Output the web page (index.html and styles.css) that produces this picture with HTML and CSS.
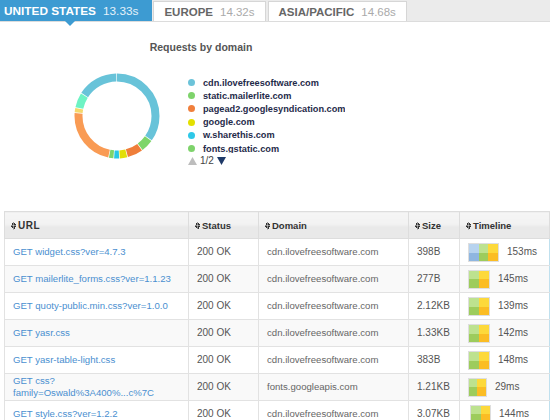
FILE: index.html
```html
<!DOCTYPE html>
<html lang="en">
<head>
    <meta charset="UTF-8">
    <title>Page speed by region</title>
    <link rel="stylesheet" href="styles.css">
</head>
<body>
    <div class="tabs">
        <div class="tab active">UNITED STATES <span class="time">13.33s</span></div>
        <div class="tab">EUROPE <span class="time">14.32s</span></div>
        <div class="tab">ASIA/PACIFIC <span class="time">14.68s</span></div>
    </div>

    <div class="chart">
        <h2 class="chart-title">Requests by domain</h2>
        <div class="chart-body">
            <svg class="donut" width="90" height="90" viewBox="0 0 90 90">
                <g transform="rotate(-90 45 45)" fill="none" stroke-width="8">
                    <circle cx="45" cy="45" r="38.5" pathLength="360" stroke="#68c3d9" stroke-dasharray="125 360" stroke-dashoffset="0"/>
                    <circle cx="45" cy="45" r="38.5" pathLength="360" stroke="#7dd56a" stroke-dasharray="17 360" stroke-dashoffset="-126"/>
                    <circle cx="45" cy="45" r="38.5" pathLength="360" stroke="#ef7e3a" stroke-dasharray="21 360" stroke-dashoffset="-144"/>
                    <circle cx="45" cy="45" r="38.5" pathLength="360" stroke="#e2de07" stroke-dasharray="10 360" stroke-dashoffset="-166"/>
                    <circle cx="45" cy="45" r="38.5" pathLength="360" stroke="#28c8e6" stroke-dasharray="7 360" stroke-dashoffset="-177"/>
                    <circle cx="45" cy="45" r="38.5" pathLength="360" stroke="#7ed46b" stroke-dasharray="6 360" stroke-dashoffset="-185"/>
                    <circle cx="45" cy="45" r="38.5" pathLength="360" stroke="#f99b54" stroke-dasharray="82 360" stroke-dashoffset="-192"/>
                    <circle cx="45" cy="45" r="38.5" pathLength="360" stroke="#f5d86a" stroke-dasharray="6 360" stroke-dashoffset="-275"/>
                    <circle cx="45" cy="45" r="38.5" pathLength="360" stroke="#6ef3c4" stroke-dasharray="20 360" stroke-dashoffset="-282"/>
                    <circle cx="45" cy="45" r="38.5" pathLength="360" stroke="#68c3d9" stroke-dasharray="56 360" stroke-dashoffset="-303"/>
                </g>
            </svg>
            <div class="legend">
                <ul class="legend-list">
                    <li><span class="dot dot-blue"></span>cdn.ilovefreesoftware.com</li>
                    <li><span class="dot dot-green"></span>static.mailerlite.com</li>
                    <li><span class="dot dot-orange"></span>pagead2.googlesyndication.com</li>
                    <li><span class="dot dot-yellow"></span>google.com</li>
                    <li><span class="dot dot-cyan"></span>w.sharethis.com</li>
                    <li><span class="dot dot-green"></span>fonts.gstatic.com</li>
                </ul>
                <div class="pager">
                    <svg width="9" height="8" viewBox="0 0 9 8"><path d="M4.5 0 L9 8 L0 8 Z" fill="#bdbdbd"/></svg>
                    <span>1/2</span>
                    <svg width="9" height="8" viewBox="0 0 9 8"><path d="M0 0 L9 0 L4.5 8 Z" fill="#1f3a68"/></svg>
                </div>
            </div>
        </div>
    </div>

    <table class="requests">
        <colgroup>
            <col style="width:184px">
            <col style="width:70px">
            <col style="width:150px">
            <col style="width:51px">
            <col style="width:90px">
        </colgroup>
        <thead>
            <tr>
                <th><span class="sort"></span>URL</th>
                <th><span class="sort"></span>Status</th>
                <th><span class="sort"></span>Domain</th>
                <th><span class="sort"></span>Size</th>
                <th><span class="sort"></span>Timeline</th>
            </tr>
        </thead>
        <tbody>
            <tr>
                <td class="url">GET widget.css?ver=4.7.3</td>
                <td>200 OK</td>
                <td class="domain">cdn.ilovefreesoftware.com</td>
                <td>398B</td>
                <td class="timeline"><span class="bar"><span class="seg seg-blue" style="width:10px"></span><span class="seg seg-green" style="width:9px"></span><span class="seg seg-yellow" style="width:10px"></span></span>153ms</td>
            </tr>
            <tr>
                <td class="url">GET mailerlite_forms.css?ver=1.1.23</td>
                <td>200 OK</td>
                <td class="domain">cdn.ilovefreesoftware.com</td>
                <td>277B</td>
                <td class="timeline"><span class="bar"><span class="seg seg-green" style="width:10px"></span><span class="seg seg-yellow" style="width:10px"></span></span>145ms</td>
            </tr>
            <tr>
                <td class="url">GET quoty-public.min.css?ver=1.0.0</td>
                <td>200 OK</td>
                <td class="domain">cdn.ilovefreesoftware.com</td>
                <td>2.12KB</td>
                <td class="timeline"><span class="bar"><span class="seg seg-green" style="width:10px"></span><span class="seg seg-yellow" style="width:10px"></span></span>139ms</td>
            </tr>
            <tr>
                <td class="url">GET yasr.css</td>
                <td>200 OK</td>
                <td class="domain">cdn.ilovefreesoftware.com</td>
                <td>1.33KB</td>
                <td class="timeline"><span class="bar"><span class="seg seg-green" style="width:10px"></span><span class="seg seg-yellow" style="width:10px"></span></span>142ms</td>
            </tr>
            <tr>
                <td class="url">GET yasr-table-light.css</td>
                <td>200 OK</td>
                <td class="domain">cdn.ilovefreesoftware.com</td>
                <td>383B</td>
                <td class="timeline"><span class="bar"><span class="seg seg-green" style="width:10px"></span><span class="seg seg-yellow" style="width:10px"></span></span>148ms</td>
            </tr>
            <tr>
                <td class="url">GET css?<br>family=Oswald%3A400%...c%7C</td>
                <td>200 OK</td>
                <td class="domain">fonts.googleapis.com</td>
                <td>1.21KB</td>
                <td class="timeline"><span class="bar"><span class="seg seg-green" style="width:8px"></span><span class="seg seg-yellow" style="width:9px"></span></span>29ms</td>
            </tr>
            <tr>
                <td class="url">GET style.css?ver=1.2.2</td>
                <td>200 OK</td>
                <td class="domain">cdn.ilovefreesoftware.com</td>
                <td>3.07KB</td>
                <td class="timeline"><span class="bar shifted"><span class="seg seg-green" style="width:10px"></span><span class="seg seg-yellow" style="width:9px"></span></span>144ms</td>
            </tr>
        </tbody>
    </table>
</body>
</html>
```

FILE: styles.css
```css
body {
    margin: 0;
    padding: 0;
    background-color: #ffffff;
    font-family: 'Liberation Sans', Arial, sans-serif;
    color: #555555;
    overflow: hidden;
}

/* region tabs */

.tabs {
    display: flex;
    gap: 2px;
    height: 21px;
    margin-left: -8px;
    background-color: #ebebeb;
    border-bottom: 1px solid #dcdcdc;
}

.tab {
    position: relative;
    display: flex;
    align-items: center;
    margin-top: 1px;
    padding: 0 10px;
    background-color: #ffffff;
    border: 1px solid #d6d6d6;
    border-bottom: none;
    color: #666666;
    font-size: 11.5px;
    font-weight: bold;
    white-space: nowrap;
}

.tab .time {
    margin-left: 7px;
    color: #aaaaaa;
    font-weight: normal;
    font-size: 11.5px;
}

.tab.active {
    margin-top: 0;
    margin-right: -1px;
    padding-left: 11px;
    padding-right: 13px;
    background-color: #3d9bd2;
    border-color: #3d9bd2;
    color: #ffffff;
    font-size: 11.8px;
}

.tab.active .time {
    color: #e4f1f9;
    font-size: 11.8px;
}

.tab.active::after {
    content: '';
    position: absolute;
    left: 72px;
    bottom: -5px;
    border-left: 5px solid transparent;
    border-right: 5px solid transparent;
    border-top: 5px solid #3d9bd2;
}

/* domain chart */

.chart {
    width: 300px;
    margin-left: 51px;
    height: 189px;
}

.chart-title {
    margin: 0;
    padding-top: 19px;
    text-align: center;
    font-size: 10.5px;
    font-weight: bold;
    color: #555555;
    line-height: 12px;
}

.chart-body {
    display: flex;
    align-items: flex-start;
    margin-top: 18px;
    margin-left: 21px;
}

.donut {
    display: block;
    margin-top: 0;
}

.legend {
    margin-left: 26px;
    margin-top: 5px;
}

.legend-list {
    list-style: none;
    margin: 0;
    padding: 0;
    height: 77px;
    overflow: hidden;
}

.legend-list li {
    display: flex;
    align-items: center;
    height: 13.2px;
    font-size: 9.2px;
    font-weight: bold;
    color: #1f2b4a;
    white-space: nowrap;
}

.dot {
    display: inline-block;
    width: 7px;
    height: 7px;
    border-radius: 50%;
    margin-right: 8px;
}

.dot-blue { background-color: #6cc3d9; }
.dot-green { background-color: #7ed36b; }
.dot-orange { background-color: #f07f3c; }
.dot-yellow { background-color: #e3e000; }
.dot-cyan { background-color: #2ec8e8; }

.pager {
    display: flex;
    align-items: center;
    gap: 3px;
    margin-top: 2px;
    font-size: 10px;
    color: #444444;
}

/* requests table */

.requests {
    margin-left: 4px;
    width: 545px;
    table-layout: fixed;
    border-collapse: collapse;
    font-size: 10px;
}

.requests th {
    height: 26px;
    padding: 0 6px;
    text-align: left;
    font-size: 9.5px;
    font-weight: bold;
    color: #333333;
    background: linear-gradient(to bottom, #f5f5f5 0%, #f2f2f2 45%, #e9e9e9 55%, #e9e9e9 100%);
    border: 1px solid #dddddd;
    white-space: nowrap;
}

.requests th:first-child {
    font-size: 10px;
    letter-spacing: 0.5px;
}

.sort {
    display: inline-block;
    vertical-align: -1px;
    width: 5px;
    height: 8px;
    margin-right: 2px;
    background:
        linear-gradient(to top left, #333333 50%, transparent 50%) 0 0 / 2.5px 3.5px no-repeat,
        linear-gradient(to top right, #333333 50%, transparent 50%) 2.5px 0 / 2.5px 3.5px no-repeat,
        linear-gradient(to bottom left, #333333 50%, transparent 50%) 0 4.5px / 2.5px 3.5px no-repeat,
        linear-gradient(to bottom right, #333333 50%, transparent 50%) 2.5px 4.5px / 2.5px 3.5px no-repeat;
}

.requests td {
    height: 26px;
    padding: 0 8px;
    line-height: 12px;
    border: 1px solid #e2e2e2;
    color: #555555;
    white-space: nowrap;
    overflow: hidden;
}

.requests tbody tr:nth-child(even) td {
    background-color: #f9f9f9;
}

.requests td.url {
    color: #4a8fd0;
    font-size: 9.6px;
}

.requests td.domain {
    color: #666666;
    font-size: 9.6px;
}

.requests td.timeline {
    border-right: 1px solid #bfe0ee;
}

.bar {
    display: inline-flex;
    vertical-align: middle;
    height: 17px;
    margin-right: 8px;
    border: 1px solid #dedede;
}

.bar.shifted {
    margin-left: 2px;
}

.seg {
    display: block;
    height: 100%;
}

.seg-blue { background: linear-gradient(to bottom, #b7d3ef 50%, #8fb6e0 50%); }
.seg-green { background: linear-gradient(to bottom, #bde28f 50%, #9dcc5c 50%); }
.seg-yellow { background: linear-gradient(to bottom, #fdd93b 50%, #fbbd24 50%); }
```
